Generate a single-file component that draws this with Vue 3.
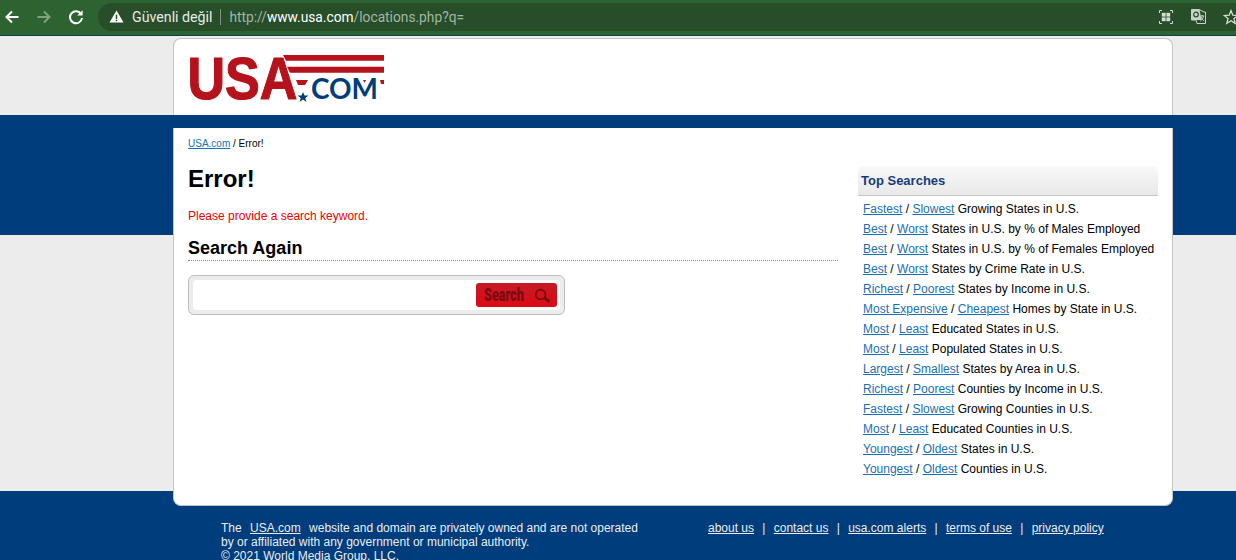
<template>
  <div class="screen">
    <!-- Browser toolbar -->
    <div class="toolbar">
      <svg class="nav-icon" viewBox="0 0 16 16" width="16" height="16">
        <path d="M14.5 8H2.5M8 2.5L2.5 8L8 13.5" fill="none" stroke="#fff" stroke-width="2" />
      </svg>
      <svg class="nav-icon faded" viewBox="0 0 16 16" width="16" height="16">
        <path d="M1.5 8H13.5M8 2.5L13.5 8L8 13.5" fill="none" stroke="#fff" stroke-width="2" />
      </svg>
      <svg class="nav-icon" viewBox="0 0 16 16" width="16" height="16">
        <path d="M13.2 5.2A6 6 0 1 0 14 9" fill="none" stroke="#fff" stroke-width="2" />
        <path d="M14.6 1.2V6.6H9.2Z" fill="#fff" />
      </svg>
      <div class="omnibox">
        <svg viewBox="0 0 16 16" width="15" height="15">
          <path d="M8 1.5L15.5 14.5H.5Z" fill="#fff" />
          <rect x="7.2" y="6" width="1.6" height="4.6" fill="#274e29" />
          <rect x="7.2" y="11.4" width="1.6" height="1.6" fill="#274e29" />
        </svg>
        <span class="secure">Güvenli değil</span>
        <span class="divider"></span>
        <span class="url">http://<b>www.usa.com</b>/locations.php?q=</span>
        <div class="omni-icons">
          <svg viewBox="0 0 14 14" width="14" height="14">
            <path d="M.5 3V.5H3M11 .5h2.5V3M13.5 11v2.5H11M3 13.5H.5V11" fill="none" stroke="#d5dcd5" />
            <rect x="2.8" y="2.8" width="3.8" height="3.8" fill="#d5dcd5" />
            <rect x="7.4" y="2.8" width="3.8" height="3.8" fill="#d5dcd5" />
            <rect x="2.8" y="7.4" width="3.8" height="3.8" fill="#d5dcd5" />
            <rect x="7.4" y="7.4" width="3.8" height="3.8" fill="#d5dcd5" />
          </svg>
          <svg viewBox="0 0 15 15" width="15" height="15">
            <path d="M.5 .5H8L13 3H14.5V14.5H6L5 11H.5Z" fill="#274e29" stroke="#c9d2c9" />
            <path d="M.5 .5H8.5L10.5 11H.5Z" fill="#c9d2c9" />
            <circle cx="5" cy="5.5" r="2.3" fill="none" stroke="#274e29" stroke-width="1.2" />
            <path d="M9.5 7H13M11.2 6V7M12.5 7C12 9.5 10.8 11 9.4 12M10 7.8C10.6 9.5 11.8 11 13.2 12" fill="none" stroke="#c9d2c9" />
          </svg>
          <svg viewBox="0 0 16 16" width="16" height="16">
            <path d="M8 1.6L9.8 6.2L14.8 6.5L11 9.6L12.2 14.4L8 11.8L3.8 14.4L5 9.6L1.2 6.5L6.2 6.2Z" fill="none" stroke="#d5dcd5" stroke-width="1.3" />
          </svg>
        </div>
      </div>
    </div>

    <!-- Page -->
    <div class="page">
      <header class="site-header">
        <svg class="logo" viewBox="0 0 196 50" width="196" height="50">
          <text x="-2.5" y="44.5" class="logo-usa" textLength="110" lengthAdjust="spacingAndGlyphs">USA</text>
          <path d="M93 1H194V6.7H96Z" fill="#b5121b" />
          <path d="M97 12.7H194V18.7H100Z" fill="#b5121b" />
          <path d="M106 26H118L115 31H108Z" fill="#b5121b" />
          <path d="M190 26H194V30H191Z" fill="#b5121b" />
          <path d="M173 26H176L174.5 29Z" fill="#b5121b" />
          <path d="M113 38L114.5 41.5H118.5L115.3 44L116.5 48L113 45.5L109.5 48L110.7 44L107.5 41.5H111.5Z" fill="#003d7c" />
          <text x="121" y="45" class="logo-com" textLength="67" lengthAdjust="spacingAndGlyphs">COM</text>
        </svg>
      </header>

      <main class="content">
        <div class="main-col">
          <div class="crumbs"><a href="#">USA.com</a> / Error!</div>
          <h1>Error!</h1>
          <p class="error-msg">Please provide a search keyword.</p>
          <h2>Search Again</h2>
          <form class="search" @submit.prevent>
            <div class="search-inner">
              <button class="search-btn" type="submit">
                <span class="search-label">Search</span>
                <svg viewBox="0 0 18 16" width="17" height="15">
                  <circle cx="7" cy="7" r="5.2" fill="none" stroke="#7a0a12" stroke-width="1.8" />
                  <path d="M11 10.5L16.5 14.5" stroke="#7a0a12" stroke-width="3" />
                </svg>
              </button>
            </div>
          </form>
        </div>

        <aside class="sidebar">
          <h3>Top Searches</h3>
          <ul>
            <li v-for="row in searches" :key="row.a + row.rest">
              <a href="#">{{ row.a }}</a> / <a href="#">{{ row.b }}</a> {{ row.rest }}
            </li>
          </ul>
        </aside>
      </main>

      <footer class="site-footer">
        <div class="legal">
          The <a href="#" class="gap">USA.com</a> website and domain are privately owned and are not operated<br />
          by or affiliated with any government or municipal authority.<br />
          © 2021 World Media Group, LLC.
        </div>
        <nav class="foot-links">
          <template v-for="(l, i) in footLinks" :key="l">
            <span v-if="i" class="sep">|</span>
            <a href="#">{{ l }}</a>
          </template>
        </nav>
      </footer>
    </div>
  </div>
</template>

<script setup>
const searches = [
  { a: 'Fastest', b: 'Slowest', rest: 'Growing States in U.S.' },
  { a: 'Best', b: 'Worst', rest: 'States in U.S. by % of Males Employed' },
  { a: 'Best', b: 'Worst', rest: 'States in U.S. by % of Females Employed' },
  { a: 'Best', b: 'Worst', rest: 'States by Crime Rate in U.S.' },
  { a: 'Richest', b: 'Poorest', rest: 'States by Income in U.S.' },
  { a: 'Most Expensive', b: 'Cheapest', rest: 'Homes by State in U.S.' },
  { a: 'Most', b: 'Least', rest: 'Educated States in U.S.' },
  { a: 'Most', b: 'Least', rest: 'Populated States in U.S.' },
  { a: 'Largest', b: 'Smallest', rest: 'States by Area in U.S.' },
  { a: 'Richest', b: 'Poorest', rest: 'Counties by Income in U.S.' },
  { a: 'Fastest', b: 'Slowest', rest: 'Growing Counties in U.S.' },
  { a: 'Most', b: 'Least', rest: 'Educated Counties in U.S.' },
  { a: 'Youngest', b: 'Oldest', rest: 'States in U.S.' },
  { a: 'Youngest', b: 'Oldest', rest: 'Counties in U.S.' }
]

const footLinks = ['about us', 'contact us', 'usa.com alerts', 'terms of use', 'privacy policy']
</script>

<style>
html, body {
  margin: 0;
  overflow: hidden;
}
</style>

<style scoped>
.screen {
  width: 1236px;
  height: 560px;
  overflow: hidden;
  font-family: "Liberation Sans", Arial, sans-serif;
  font-size: 12px;
  color: #000;
}

/* Toolbar */
.toolbar {
  height: 36px;
  box-sizing: border-box;
  padding: 2px 0 4px 4px;
  display: flex;
  align-items: center;
  gap: 16px;
  background: #2c6330;
  border-bottom: 1px solid #0b3f5e;
}

.nav-icon {
  flex: none;
}

.faded {
  opacity: 0.4;
}

.omnibox {
  flex: 1;
  height: 28px;
  margin-left: -2px;
  padding-left: 11px;
  display: flex;
  align-items: center;
  background: #274e29;
  border-radius: 14px 0 0 14px;
  font-family: Roboto, "Liberation Sans", sans-serif;
  font-size: 13.75px;
}

.secure {
  margin-left: 8px;
  color: #e6ebe6;
  font-size: 14.2px;
}

.divider {
  width: 1px;
  height: 16px;
  margin: 0 8px;
  background: #7d937e;
}

.url {
  color: #a3b5a4;
}

.url b {
  color: #fff;
  font-weight: 400;
}

.omni-icons {
  margin-left: auto;
  display: flex;
  align-items: center;
  gap: 17.5px;
  margin-right: -3px;
}

/* Page */
.page {
  height: 524px;
  padding-top: 2px;
  box-sizing: border-box;
  background: linear-gradient(
    #ececec 79px,
    #003d7c 79px,
    #003d7c 199px,
    #ececec 199px,
    #ececec 455px,
    #003d7c 455px
  );
}

.site-header {
  width: 1000px;
  height: 77px;
  margin-left: 173px;
  padding: 15px 0 0 16px;
  box-sizing: border-box;
  background: #fff;
  border: 1px solid #c4c4c4;
  border-bottom: 0;
  border-radius: 8px 8px 0 0;
}

.logo {
  display: block;
  overflow: visible;
}

.logo-usa {
  font-family: "Liberation Sans", sans-serif;
  font-size: 60px;
  font-weight: 700;
  fill: #b5121b;
  stroke: #b5121b;
  stroke-width: 1.2px;
}

.logo-com {
  font-family: Lato, "Liberation Sans", sans-serif;
  font-size: 29px;
  font-weight: 700;
  fill: #003d7c;
}

.content {
  width: 1000px;
  height: 378px;
  margin: 13px 0 0 173px;
  padding: 0 14px;
  box-sizing: border-box;
  display: flex;
  justify-content: space-between;
  background: #fff;
  border: 1px solid #c4c4c4;
  border-top: 0;
  border-radius: 0 0 8px 8px;
}

.main-col {
  width: 650px;
  padding-top: 10px;
}

.crumbs {
  font-size: 10px;
  line-height: 12px;
}

a {
  color: #1a6fb5;
  text-decoration: underline;
}

h1 {
  margin: 15px 0 0;
  font-size: 24px;
  line-height: 28px;
}

.error-msg {
  margin: 16px 0 0;
  color: #f00000;
  line-height: 14px;
}

h2 {
  margin: 15px 0 0;
  padding-bottom: 1px;
  font-size: 18px;
  line-height: 21px;
  border-bottom: 1px dotted #888;
}

.search {
  width: 377px;
  height: 40px;
  margin-top: 14px;
  padding: 4px;
  box-sizing: border-box;
  background: #ececec;
  border: 1px solid #bdbdbd;
  border-radius: 6px;
}

.search-inner {
  height: 100%;
  padding: 3px 3px 3px 0;
  box-sizing: border-box;
  display: flex;
  justify-content: flex-end;
  background: #fff;
  border-radius: 4px;
}

.search-btn {
  width: 81px;
  padding: 0 6px 0 8px;
  display: flex;
  align-items: center;
  justify-content: space-between;
  background: linear-gradient(#c41a24, #dc0a16);
  border: 0;
  border-radius: 3px;
}

.search-label {
  display: inline-block;
  width: 41px;
  font-family: Roboto, sans-serif;
  font-size: 17.5px;
  font-weight: 900;
  color: #7a0a12;
  transform: scaleX(0.72);
  transform-origin: left center;
}

.sidebar {
  width: 300px;
  margin-top: 38px;
}

h3 {
  margin: 0;
  height: 30px;
  padding-left: 3px;
  box-sizing: border-box;
  font-size: 13px;
  line-height: 29px;
  color: #143c7c;
  background: linear-gradient(#f8f8f8, #e9e9e9);
  border-bottom: 1px solid #c4c4c4;
  border-radius: 6px 6px 0 0;
}

ul {
  margin: 3px 0 0;
  padding: 0 0 0 5px;
  list-style: none;
}

li {
  height: 20px;
  line-height: 20px;
  white-space: nowrap;
}

/* Footer */
.site-footer {
  margin-left: 173px;
  width: 1000px;
  padding: 15px 0 0 48px;
  box-sizing: border-box;
  display: flex;
  color: #e8edf3;
  line-height: 14px;
}

.site-footer a {
  color: #e8edf3;
}

.gap {
  margin: 0 5px;
}

.legal {
  width: 487px;
  white-space: nowrap;
}

.foot-links {
  white-space: nowrap;
}

.sep {
  margin: 0 8.3px;
}
</style>
